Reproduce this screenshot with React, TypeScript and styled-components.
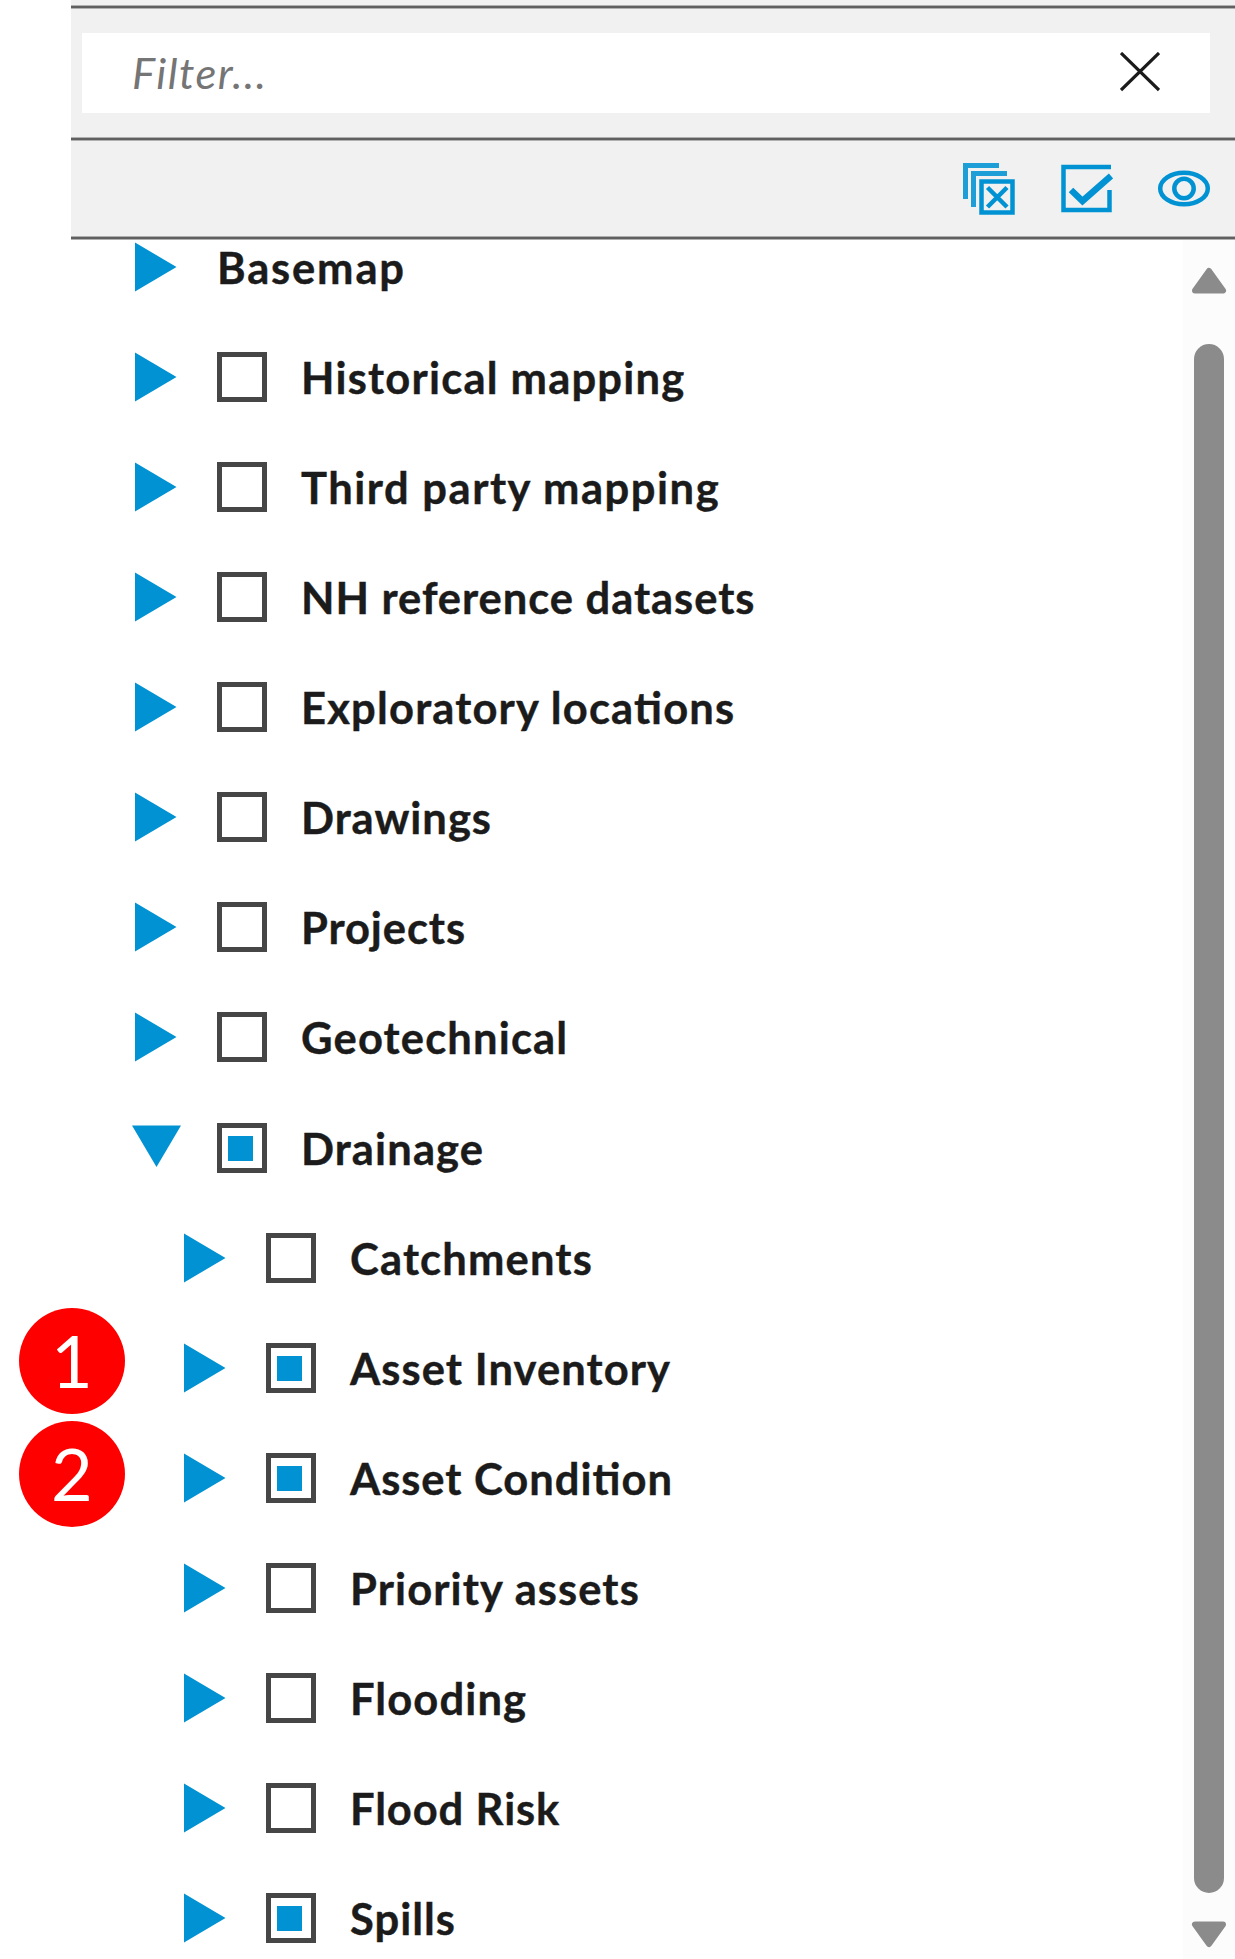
import React, { useState } from "react";
import styled, { createGlobalStyle } from "styled-components";

const BLUE = "#0092d2";

const GlobalStyle = createGlobalStyle`
  * { box-sizing: border-box; }
  html, body { margin: 0; padding: 0; background: #fff; overflow: hidden; }
`;

const Page = styled.div`
  position: relative;
  width: 1235px;
  height: 1959px;
  padding-left: 71px;
  overflow: hidden;
  background: #fff;
  font-family: Lato, "Open Sans", sans-serif;
`;

const Panel = styled.section`
  display: flex;
  flex-direction: column;
  height: 100%;
`;

const TopEdge = styled.div`
  flex: none;
  height: 5px;
  background: #f1f1f1;
`;

const Rule = styled.div`
  flex: none;
  height: 4px;
  background: linear-gradient(#b0b0b0 0 1px, #606060 1px 3px, #b0b0b0 3px 4px);
`;

const FilterBar = styled.div`
  flex: none;
  height: 128px;
  padding: 24px 25px 24px 11px;
  background: #f1f1f1;
`;

const FilterField = styled.div`
  display: flex;
  align-items: center;
  justify-content: space-between;
  height: 80px;
  padding: 0 50px 2px;
  background: #fff;
`;

const FilterInput = styled.input`
  width: 600px;
  height: 60px;
  padding: 0;
  border: 0;
  outline: 0;
  background: transparent;
  color: #757575;
  font: italic 400 43.5px/60px Lato, sans-serif;
  letter-spacing: 1.5px;
  &::placeholder { color: #757575; opacity: 1; }
`;

const IconButton = styled.button`
  display: flex;
  padding: 0;
  border: 0;
  background: none;
  cursor: pointer;
`;

const Toolbar = styled.div`
  flex: none;
  display: flex;
  align-items: center;
  justify-content: flex-end;
  gap: 44px;
  height: 95px;
  padding-right: 24px;
  background: #f1f1f1;
`;

const Content = styled.div`
  flex: 1;
  min-height: 0;
  display: flex;
  justify-content: space-between;
`;

const Tree = styled.ul`
  flex: 1;
  margin: 0;
  padding: 0;
  list-style: none;
  margin-top: -28px;
`;

const Row = styled.li<{ $child?: boolean }>`
  display: flex;
  align-items: center;
  height: 110.07px;
  padding-left: ${(p) => (p.$child ? 112 : 63)}px;
`;

const Arrow = styled.svg`
  flex: none;
  width: 50px;
  height: 50px;
  margin-right: 33px;
  fill: ${BLUE};
  overflow: visible;
`;

const CheckBox = styled.span`
  flex: none;
  display: flex;
  align-items: center;
  justify-content: center;
  width: 50px;
  height: 50px;
  margin-right: 34px;
  border: 5px solid #464646;
  background: #fff;
`;

const PartialMark = styled.span`
  width: 25px;
  height: 25px;
  margin: 2px 3px 0 0;
  background: ${BLUE};
`;

const Label = styled.span<{ $spacing: number }>`
  color: #1b1b1b;
  font-size: 43.5px;
  font-weight: 700;
  line-height: 54px;
  white-space: nowrap;
  letter-spacing: ${(p) => p.$spacing}px;
  font-feature-settings: "liga" 1;
  -webkit-text-stroke: 0.4px #1b1b1b;
`;

const ScrollTrack = styled.div`
  flex: none;
  display: flex;
  flex-direction: column;
  align-items: center;
  width: 52px;
  padding: 27px 0 10px;
  background: #fcfcfc;
`;

const ScrollArrow = styled.svg`
  flex: none;
  width: 36px;
  height: 28px;
  fill: #8b8b8b;
  stroke: #8b8b8b;
  stroke-width: 6;
  stroke-linejoin: round;
`;

const ScrollThumb = styled.div`
  flex: none;
  width: 30px;
  height: 1549px;
  margin: 49px 0 27px;
  border-radius: 15px;
  background: #8b8b8b;
`;

const Callout = styled.span<{ $top: number }>`
  position: absolute;
  left: 19px;
  top: ${(p) => p.$top}px;
  display: flex;
  align-items: center;
  justify-content: center;
  width: 106px;
  height: 106px;
  border-radius: 50%;
  background: #f00;
  color: #fff;
  font: 400 72px/102px Lato, sans-serif;
  padding-bottom: 3px;
`;

type Item = { label: string; spacing: number; child?: boolean; open?: boolean; box?: "empty" | "partial" };

const items: Item[] = [
  { label: "Basemap", spacing: 1.85 },
  { label: "Historical mapping", spacing: 1.22, box: "empty" },
  { label: "Third party mapping", spacing: 1.52, box: "empty" },
  { label: "NH reference datasets", spacing: 0.96, box: "empty" },
  { label: "Exploratory locations", spacing: 1.18, box: "empty" },
  { label: "Drawings", spacing: 0.98, box: "empty" },
  { label: "Projects", spacing: 0.9, box: "empty" },
  { label: "Geotechnical", spacing: 1.17, box: "empty" },
  { label: "Drainage", spacing: 1.12, box: "partial", open: true },
  { label: "Catchments", spacing: 1.17, box: "empty", child: true },
  { label: "Asset Inventory", spacing: 1.09, box: "partial", child: true },
  { label: "Asset Condition", spacing: 0.97, box: "partial", child: true },
  { label: "Priority assets", spacing: 1.1, box: "empty", child: true },
  { label: "Flooding", spacing: 1.1, box: "empty", child: true },
  { label: "Flood Risk", spacing: 0.88, box: "empty", child: true },
  { label: "Spills", spacing: 1.0, box: "partial", child: true },
];

export default function App() {
  const [filter, setFilter] = useState("");
  return (
    <Page>
      <GlobalStyle />
      <Panel>
        <TopEdge />
        <Rule />
        <FilterBar>
          <FilterField>
            <FilterInput placeholder="Filter..." value={filter} onChange={(e) => setFilter(e.target.value)} />
            <IconButton aria-label="Clear filter" onClick={() => setFilter("")}>
              <svg width="40" height="40" viewBox="0 0 40 40" fill="none" stroke="#1b1b1b" strokeWidth="3.2">
                <path d="M1 1 39 38M39 1 1 38" />
              </svg>
            </IconButton>
          </FilterField>
        </FilterBar>
        <Rule />
        <Toolbar>
          <IconButton aria-label="Clear all layers">
            <svg width="54" height="54" viewBox="-1 0 54 54" fill="none" stroke={BLUE} strokeWidth="5">
              <path d="M3.500 37V3.500H37M11.500 45V11.500H45" strokeOpacity=".88" />
              <path d="M19.500 19.500H50.500V50.500H19.500Z" strokeWidth="4.500" />
              <path d="M25.500 25.500 45 45M45 25.500 25.500 45" strokeWidth="4.500" />
            </svg>
          </IconButton>
          <IconButton aria-label="Show checked">
            <svg width="54" height="54" viewBox="-1 0 54 54" fill="none" stroke={BLUE} strokeWidth="4.500">
              <path d="M51 5H3.500V48H49.500V28" />
              <path d="M11 28 22.500 39 51 14" strokeWidth="6.500" />
            </svg>
          </IconButton>
          <IconButton aria-label="Visibility">
            <svg width="54" height="40" viewBox="0 0.500 54 40" fill="none" stroke={BLUE} strokeWidth="4.500">
              <ellipse cx="27" cy="20" rx="23.800" ry="15.800" />
              <circle cx="27" cy="20" r="9.700" />
            </svg>
          </IconButton>
        </Toolbar>
        <Rule />
        <Content>
          <Tree>
            {items.map((item) => (
              <Row key={item.label} $child={item.child}>
                <Arrow viewBox="0 0 50 50">
                  <path d={item.open ? "M-2 2.500H47L22.500 44Z" : "M1 0.500V49.500L42.500 25Z"} />
                </Arrow>
                {item.box && <CheckBox>{item.box === "partial" && <PartialMark />}</CheckBox>}
                <Label $spacing={item.spacing}>{item.label}</Label>
              </Row>
            ))}
          </Tree>
          <ScrollTrack>
            <ScrollArrow viewBox="0 0 36 28"><path d="M18 4 32 23.500H4Z" /></ScrollArrow>
            <ScrollThumb />
            <ScrollArrow viewBox="0 0 36 28"><path d="M4 4.500H32L18 24Z" /></ScrollArrow>
          </ScrollTrack>
        </Content>
      </Panel>
      <Callout $top={1308}>1</Callout>
      <Callout $top={1421}>2</Callout>
    </Page>
  );
}
